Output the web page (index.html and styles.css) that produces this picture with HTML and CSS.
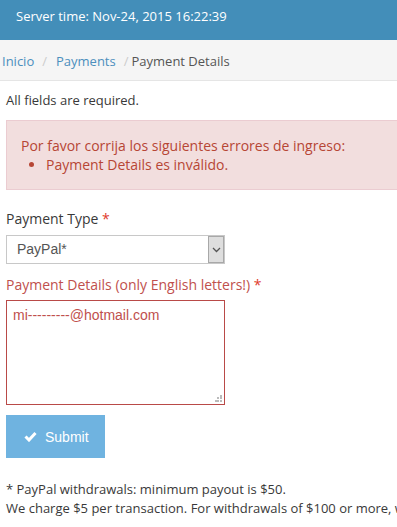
FILE: index.html
```html
<!DOCTYPE html>
<html>
<head>
<meta charset="utf-8">
<link rel="stylesheet" href="styles.css">
</head>
<body>
<div class="topbar">Server time: Nov-24, 2015 16:22:39</div>
<div class="breadcrumbs">
  <a class="crumb" href="#">Inicio</a><span class="sep">/</span><a class="crumb" href="#">Payments</a><span class="sep last">/</span><span class="current">Payment Details</span>
</div>
<div class="content">
  <p class="note">All fields are required.</p>
  <div class="alert">
    <div>Por favor corrija los siguientes errores de ingreso:</div>
    <ul class="errors"><li>Payment Details es inválido.</li></ul>
  </div>
  <div class="field">
    <label class="label">Payment Type <span class="req">*</span></label>
    <div class="select">
      <span class="select-value">PayPal*</span>
      <span class="select-arrow"><svg width="9" height="6" viewBox="0 0 9 6"><path d="M1 1 L4.5 4.5 L8 1" fill="none" stroke="#555" stroke-width="1.3"/></svg></span>
    </div>
  </div>
  <div class="field error">
    <label class="label">Payment Details (only English letters!) <span class="req">*</span></label>
    <div class="textarea">mi---------@hotmail.com<span class="grip"></span></div>
  </div>
  <button class="submit"><svg width="13" height="11" viewBox="0 0 13 11"><path d="M1.5 5.5 L5 9 L11.5 2" fill="none" stroke="#fff" stroke-width="3"/></svg>Submit</button>
  <p class="footer">* PayPal withdrawals: minimum payout is $50.<br>We charge $5 per transaction. For withdrawals of $100 or more, we</p>
</div>
</body>
</html>
```
FILE: styles.css
```css
html, body { margin: 0; padding: 0; }
body {
  font-family: "Open Sans", "Liberation Sans", sans-serif;
  font-size: 13px;
  color: #393939;
  background: #fff;
  overflow: hidden;
  width: 397px;
}
.topbar {
  height: 40px;
  background: #438eb9;
  color: #fff;
  line-height: 33px;
  padding-left: 16px;
  box-sizing: border-box;
  white-space: nowrap;
}
.breadcrumbs {
  height: 41px;
  box-sizing: border-box;
  background: #f5f5f5;
  border-bottom: 1px solid #e5e5e5;
  line-height: 42px;
  padding-left: 2px;
  white-space: nowrap;
}
.crumb { color: #4c8fbd; text-decoration: none; }
.sep { color: #ccc; padding: 0 9px 0 8px; }
.sep.last { padding: 0 3px 0 8px; }
.current { color: #555; }
.content { padding-left: 6px; }
.note { margin: 9px 0 0; line-height: 20px; }
.alert {
  margin-top: 10px;
  background: #f2dede;
  border: 1px solid #ebccd1;
  border-right: none;
  color: #b74635;
  padding: 15px 14px 15px 14px;
  font-size: 14px;
  line-height: 19px;
  white-space: nowrap;
}
.errors { margin: 0; padding-left: 25px; }
.field { margin-top: 19px; }
.field + .field { margin-top: 11px; }
.label { display: block; font-size: 14px; line-height: 20px; color: #393939; margin-bottom: 6px; }
.field + .field .label { margin-bottom: 5px; }
.req { color: #e03b2c; }
.error .label { color: #c0504d; }
.select {
  display: flex;
  width: 219px;
  height: 29px;
  box-sizing: border-box;
  border: 1px solid #c8c8c8;
  background: #fff;
}
.select-value {
  flex: 1;
  font-family: "Liberation Sans", Arial, sans-serif;
  font-size: 14px;
  color: #555;
  line-height: 27px;
  padding-left: 10px;
}
.select-arrow {
  width: 14px;
  background: #dedede;
  border: 1px solid #a8a8a8;
  display: flex;
  align-items: center;
  justify-content: center;
}
.textarea {
  position: relative;
  width: 219px;
  height: 105px;
  box-sizing: border-box;
  border: 1px solid #b94a48;
  padding: 6px 6px;
  font-family: "Liberation Sans", Arial, sans-serif;
  font-size: 14px;
  line-height: 16px;
  color: #c0504d;
}
.grip {
  position: absolute;
  right: 2px;
  bottom: 2px;
  width: 7px;
  height: 7px;
  background:
    linear-gradient(#bbb,#bbb) 5px 0/2px 2px no-repeat,
    linear-gradient(#bbb,#bbb) 2px 2px/2px 2px no-repeat,
    linear-gradient(#bbb,#bbb) 5px 2px/2px 2px no-repeat,
    linear-gradient(#bbb,#bbb) 0 5px/2px 2px no-repeat,
    linear-gradient(#bbb,#bbb) 2px 5px/2px 2px no-repeat,
    linear-gradient(#bbb,#bbb) 5px 5px/2px 2px no-repeat;
}
.submit {
  margin-top: 10px;
  width: 99px;
  height: 43px;
  background: #6fb3e0;
  border: none;
  color: #fff;
  font-family: "Liberation Sans", Arial, sans-serif;
  font-size: 14px;
  display: flex;
  align-items: center;
  padding: 0 0 0 18px;
  gap: 8px;
}
.footer { margin: 22px 0 0; line-height: 19px; white-space: nowrap; }
```
